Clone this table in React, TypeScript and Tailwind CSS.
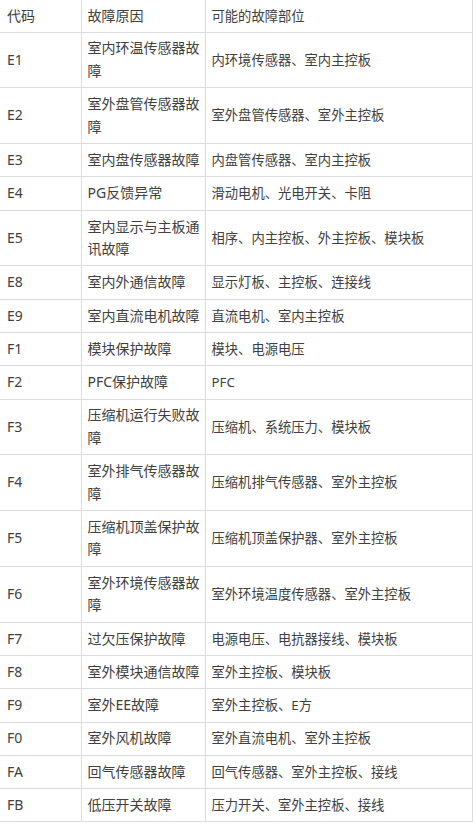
import React from "react";

const rows: [string, string, string][] = [
  ["E1", "室内环温传感器故障", "内环境传感器、室内主控板"],
  ["E2", "室外盘管传感器故障", "室外盘管传感器、室外主控板"],
  ["E3", "室内盘传感器故障", "内盘管传感器、室内主控板"],
  ["E4", "PG反馈异常", "滑动电机、光电开关、卡阻"],
  ["E5", "室内显示与主板通讯故障", "相序、内主控板、外主控板、模块板"],
  ["E8", "室内外通信故障", "显示灯板、主控板、连接线"],
  ["E9", "室内直流电机故障", "直流电机、室内主控板"],
  ["F1", "模块保护故障", "模块、电源电压"],
  ["F2", "PFC保护故障", "PFC"],
  ["F3", "压缩机运行失败故障", "压缩机、系统压力、模块板"],
  ["F4", "室外排气传感器故障", "压缩机排气传感器、室外主控板"],
  ["F5", "压缩机顶盖保护故障", "压缩机顶盖保护器、室外主控板"],
  ["F6", "室外环境传感器故障", "室外环境温度传感器、室外主控板"],
  ["F7", "过欠压保护故障", "电源电压、电抗器接线、模块板"],
  ["F8", "室外模块通信故障", "室外主控板、模块板"],
  ["F9", "室外EE故障", "室外主控板、E方"],
  ["F0", "室外风机故障", "室外直流电机、室外主控板"],
  ["FA", "回气传感器故障", "回气传感器、室外主控板、接线"],
  ["FB", "低压开关故障", "压力开关、室外主控板、接线"],
];

export default function App() {
  return (
    <div
      className="w-[473px] bg-white text-[#404040]"
      style={{ fontFamily: '"Noto Sans", "Noto Sans CJK SC", sans-serif' }}
    >
      <table className="w-[473px] border-collapse table-fixed">
        <colgroup>
          <col className="w-[81px]" />
          <col className="w-[124px]" />
          <col className="w-[268px]" />
        </colgroup>
        <thead>
          <tr className="border-b border-[#dcdcdc]">
            <td className="h-[32px] pl-[7px] pr-[2px] py-0 text-[14px] leading-[22.5px] border-r border-[#dcdcdc] align-middle">代码</td>
            <td className="pl-[6px] pr-[2px] text-[14px] leading-[22.5px] border-r border-[#dcdcdc] align-middle">故障原因</td>
            <td className="pl-[6px] pr-[2px] text-[13.3px] leading-[22.5px] border-r-2 border-[#dcdcdc] align-middle">可能的故障部位</td>
          </tr>
        </thead>
        <tbody>
          {rows.map(([c, r, p]) => (
            <tr key={c} className="border-b border-[#dcdcdc]">
              <td className="pl-[7px] pr-[2px] py-[4.9px] text-[14px] leading-[22.5px] border-r border-[#dcdcdc] align-middle">{c}</td>
              <td className="pl-[6px] pr-[2px] py-[4.9px] text-[14px] leading-[22.5px] border-r border-[#dcdcdc] align-middle">{r}</td>
              <td className="pl-[6px] pr-[2px] py-[4.9px] text-[13.3px] leading-[22.5px] border-r-2 border-[#dcdcdc] align-middle">{p}</td>
            </tr>
          ))}
        </tbody>
      </table>
    </div>
  );
}
